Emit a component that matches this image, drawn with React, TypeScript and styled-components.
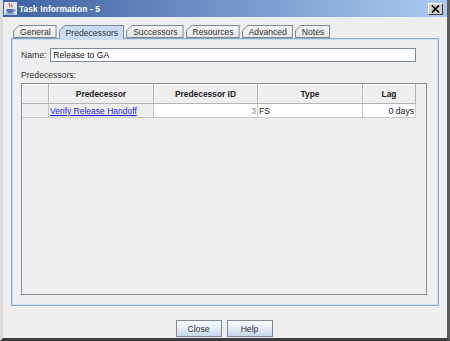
import styled, { createGlobalStyle } from "styled-components";

const GlobalStyle = createGlobalStyle`
  html, body {
    margin: 0;
    padding: 0;
    background: #eeeeee;
  }
  * {
    box-sizing: border-box;
  }
`;

const font = `"Liberation Sans", Arial, sans-serif`;

const Window = styled.div`
  width: 450px;
  height: 341px;
  display: flex;
  flex-direction: column;
  background: #eeeeee;
  border-left: 3px solid #dcdbd6;
  border-right: 3px solid #5a5a5a;
  border-bottom: 3px solid #3c3c3c;
  font-family: ${font};
  font-size: 8.6px;
  color: #333333;
`;

const TitleBar = styled.div`
  height: 17px;
  display: flex;
  align-items: center;
  padding: 0 4px 0 1px;
  gap: 2px;
  background: linear-gradient(to right, #3f62a2 0%, #6d8fc4 45%, #a9cbf0 100%);
  color: #ffffff;
  font-weight: bold;
  font-size: 8.4px;
`;

const TitleText = styled.span`
  flex: 1;
  letter-spacing: 0.1px;
`;

const CloseBox = styled.div`
  width: 15px;
  height: 12px;
  background: #d4d0c8;
  border: 1px solid;
  border-color: #ffffff #404040 #404040 #ffffff;
  display: flex;
  align-items: center;
  justify-content: center;
`;

const Body = styled.div`
  flex: 1;
  display: flex;
  flex-direction: column;
  padding: 8px 8px 0 8px;
`;

const TabStrip = styled.div`
  display: flex;
  gap: 2px;
  padding-left: 2px;
  height: 13px;
  align-items: flex-end;
`;

const Tab = styled.div<{ $active?: boolean }>`
  position: relative;
  height: ${(p) => (p.$active ? 14 : 13)}px;
  margin-bottom: ${(p) => (p.$active ? -1 : 0)}px;
  padding: 0 6px 0 7px;
  display: flex;
  align-items: center;
  color: #333333;
  background: #7a8a99;
  clip-path: polygon(0 6px, 6px 0, 100% 0, 100% 100%, 0 100%);
  z-index: ${(p) => (p.$active ? 2 : 1)};

  &::before {
    content: "";
    position: absolute;
    left: 1px;
    top: 1px;
    right: 1px;
    bottom: ${(p) => (p.$active ? 0 : 1)}px;
    background: ${(p) =>
      p.$active ? "#c8ddf2" : "linear-gradient(#f4f4f4, #e6e6e6)"};
    clip-path: polygon(0 5px, 5px 0, 100% 0, 100% 100%, 0 100%);
  }

  span {
    position: relative;
    padding-top: 1px;
  }
`;

const Panel = styled.div`
  height: 268px;
  border: 1px solid #8ea6c4;
  box-shadow: inset 0 0 0 1px #c8ddf2;
  padding: 9px 11px 10px 9px;
  display: flex;
  flex-direction: column;
`;

const NameRow = styled.div`
  display: flex;
  align-items: center;
  gap: 4px;
  height: 14px;
`;

const Label = styled.span`
  color: #333333;
`;

const TextField = styled.div`
  width: 366px;
  height: 14px;
  background: #ffffff;
  border: 1px solid #7a8a99;
  padding: 0 2px;
  display: flex;
  align-items: center;
  color: #111111;
`;

const SectionLabel = styled.div`
  margin-top: 6px;
  height: 14px;
  display: flex;
  align-items: center;
`;

const ScrollPane = styled.div`
  flex: 1;
  margin-top: 1px;
  border: 1px solid #8c8c8c;
  background: #eeeeee;
`;

const Grid = styled.div`
  display: grid;
  grid-template-columns: 27px 105px 104px 105px 53px;
  grid-template-rows: 20px 14px;
  width: 394px;
`;

const HeadCell = styled.div`
  border-right: 1px solid #b4b4b4;
  border-bottom: 1px solid #b4b4b4;
  box-shadow: inset 1px 1px 0 #ffffff;
  display: flex;
  align-items: center;
  justify-content: center;
  font-weight: bold;
  font-size: 8.4px;
  color: #222222;
`;

const Cell = styled.div<{ $align?: "left" | "right"; $bg?: string; $dim?: boolean }>`
  border-right: 1px solid #c8c8c8;
  border-bottom: 1px solid #c8c8c8;
  background: ${(p) => p.$bg ?? "#ffffff"};
  display: flex;
  align-items: center;
  justify-content: ${(p) => (p.$align === "right" ? "flex-end" : "flex-start")};
  padding: 0 1px;
  color: ${(p) => (p.$dim ? "#8a8a8a" : "#222222")};
  white-space: nowrap;
  overflow: hidden;
`;

const Link = styled.a`
  color: #1a1aee;
  text-decoration: underline;
  font-size: 8.5px;
`;

const ButtonRow = styled.div`
  display: flex;
  justify-content: center;
  gap: 5px;
  margin-top: 14px;
  padding-right: 2px;
`;

const Button = styled.div`
  width: 46px;
  height: 17px;
  border: 1px solid #7a8a99;
  background: linear-gradient(#fbfcfe 0%, #e6eef7 45%, #c6d8ec 100%);
  display: flex;
  align-items: center;
  justify-content: center;
  color: #333333;
`;

function JavaIcon() {
  return (
    <svg width="13" height="13" viewBox="0 0 13 13">
      <rect x="0" y="0" width="13" height="13" fill="#dfe6f2" />
      <path d="M5.5 1.2c-1.4 1.4 1.4 2.2 0 4.2M7.8 2.2c-1 1 1 1.6 0 3.2" stroke="#e2561c" strokeWidth="1.1" fill="none" />
      <path d="M2.5 7h7v2c0 1.3-1 2-2 2h-3c-1 0-2-.7-2-2z" fill="#5577b6" />
      <path d="M9.5 7.6h1c.9 0 .9 1.8 0 1.8h-1" stroke="#5577b6" strokeWidth="0.9" fill="none" />
      <rect x="1.5" y="11.4" width="9.5" height="1" fill="#5577b6" />
    </svg>
  );
}

export default function App() {
  const tabs = ["General", "Predecessors", "Successors", "Resources", "Advanced", "Notes"];
  return (
    <>
      <GlobalStyle />
      <Window>
        <TitleBar>
          <JavaIcon />
          <TitleText>Task Information - 5</TitleText>
          <CloseBox>
            <svg width="9" height="8" viewBox="0 0 9 8">
              <path d="M1 0.5l7 7M8 0.5l-7 7" stroke="#000" strokeWidth="1.7" />
            </svg>
          </CloseBox>
        </TitleBar>
        <Body>
          <TabStrip>
            {tabs.map((t) => (
              <Tab key={t} $active={t === "Predecessors"}>
                <span>{t}</span>
              </Tab>
            ))}
          </TabStrip>
          <Panel>
            <NameRow>
              <Label>Name:</Label>
              <TextField>Release to GA</TextField>
            </NameRow>
            <SectionLabel>Predecessors:</SectionLabel>
            <ScrollPane>
              <Grid>
                <HeadCell />
                <HeadCell>Predecessor</HeadCell>
                <HeadCell>Predecessor ID</HeadCell>
                <HeadCell>Type</HeadCell>
                <HeadCell>Lag</HeadCell>
                <Cell $bg="#eeeeee" />
                <Cell $bg="#eeeeee">
                  <Link>Verify Release Handoff</Link>
                </Cell>
                <Cell $align="right" $dim>3</Cell>
                <Cell>FS</Cell>
                <Cell $align="right">0 days</Cell>
              </Grid>
            </ScrollPane>
          </Panel>
          <ButtonRow>
            <Button>Close</Button>
            <Button>Help</Button>
          </ButtonRow>
        </Body>
      </Window>
    </>
  );
}
